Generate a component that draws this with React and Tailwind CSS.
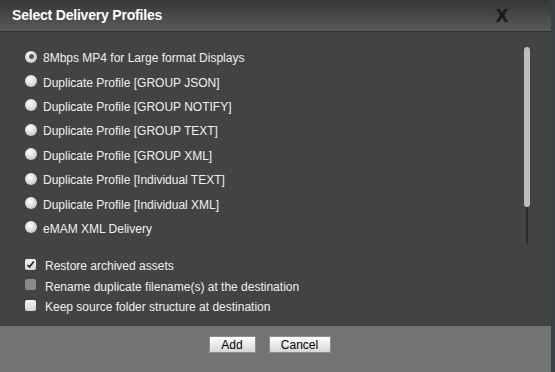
import React, { useState } from 'react';

const profiles = [
  '8Mbps MP4 for Large format Displays',
  'Duplicate Profile [GROUP JSON]',
  'Duplicate Profile [GROUP NOTIFY]',
  'Duplicate Profile [GROUP TEXT]',
  'Duplicate Profile [GROUP XML]',
  'Duplicate Profile [Individual TEXT]',
  'Duplicate Profile [Individual XML]',
  'eMAM XML Delivery',
];

const options = [
  { label: 'Restore archived assets', checked: true, disabled: false },
  { label: 'Rename duplicate filename(s) at the destination', checked: false, disabled: true },
  { label: 'Keep source folder structure at destination', checked: false, disabled: false },
];

function Radio({ selected }) {
  return (
    <span className="w-[12px] h-[12px] rounded-full bg-[radial-gradient(circle_at_40%_35%,#ffffff,#d8d8d8_55%,#a8a8a8)] flex items-center justify-center shrink-0">
      {selected && <span className="w-[5px] h-[5px] rounded-full bg-[#555]" />}
    </span>
  );
}

function Check({ checked, disabled }) {
  return (
    <span
      className={`w-[11px] h-[11px] rounded-[2px] flex items-center justify-center shrink-0 ${
        disabled ? 'bg-[#8a8a8a]' : 'bg-gradient-to-b from-[#f2f2f2] to-[#d4d4d4]'
      }`}
    >
      {checked && (
        <svg width="9" height="9" viewBox="0 0 9 9">
          <path d="M1.5 5 L3.5 7 L7.8 1.5" fill="none" stroke="#222" strokeWidth="1.6" />
        </svg>
      )}
    </span>
  );
}

export default function App() {
  const [selected, setSelected] = useState(0);

  return (
    <div className="w-[555px] h-[372px] flex bg-[#3b3f46] font-['Liberation_Sans',Arial,sans-serif] overflow-hidden">
      <div className="w-[551px] flex flex-col">
        {/* header */}
        <div className="h-[32px] rounded-tr-[6px] bg-gradient-to-b from-[#363636] to-[#5a5a5a] border-b border-[#2e2e2e] flex items-center justify-between pl-[12px] pr-[43px]">
          <span className="text-white font-bold text-[14px] tracking-[-0.2px]">Select Delivery Profiles</span>
          <span className="text-[#1a1a1a] font-black text-[18px] leading-none [text-shadow:0_0_1px_#1a1a1a]">X</span>
        </div>

        {/* body */}
        <div className="h-[294px] bg-[#434343] flex">
          <div className="flex-1 pl-[25px] pt-[14px]">
            <div className="flex flex-col">
              {profiles.map((p, i) => (
                <div
                  key={p}
                  onClick={() => setSelected(i)}
                  className="h-[24.4px] flex items-center gap-[6px] text-[#f0f0f0] text-[12px]"
                >
                  <span className="-mt-[3px]">
                    <Radio selected={selected === i} />
                  </span>
                  <span>{p}</span>
                </div>
              ))}
            </div>
            <div className="flex flex-col mt-[15px]">
              {options.map((o) => (
                <div key={o.label} className="h-[20.5px] flex items-center gap-[9px] text-[#f0f0f0] text-[12px]">
                  <span className="-mt-[4px]">
                    <Check checked={o.checked} disabled={o.disabled} />
                  </span>
                  <span>{o.label}</span>
                </div>
              ))}
            </div>
          </div>
          {/* scrollbar */}
          <div className="w-[6px] mr-[21px] mt-[15px] flex flex-col items-center">
            <div className="w-[6px] h-[160px] rounded-[3px] bg-[#bdbdbd]" />
            <div className="w-[2px] h-[37px] bg-[#2c2c2c]" />
          </div>
        </div>

        {/* footer */}
        <div className="flex-1 bg-[#737373] flex justify-center items-start pt-[10px] gap-[13px] pr-[12px]">
          <button className="w-[47px] h-[17px] border border-[#8c8c8c] bg-gradient-to-b from-[#ffffff] to-[#d6d6d6] text-black text-[12px] leading-none">
            Add
          </button>
          <button className="w-[62px] h-[17px] border border-[#8c8c8c] bg-gradient-to-b from-[#ffffff] to-[#d6d6d6] text-black text-[12px] leading-none">
            Cancel
          </button>
        </div>
      </div>
    </div>
  );
}
